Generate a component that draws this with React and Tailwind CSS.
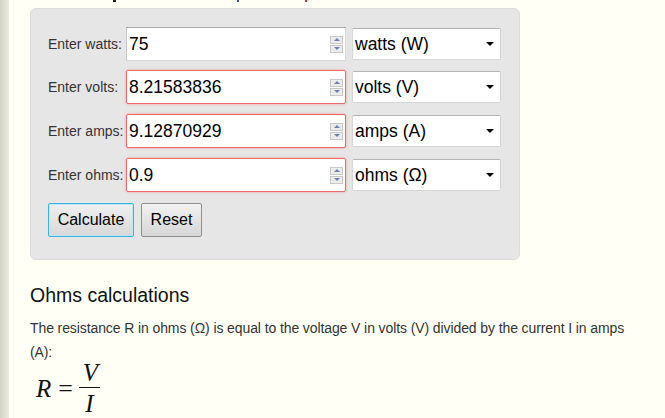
import React from "react";

function Spinner() {
  return (
    <div className="flex flex-col gap-[1px] mr-[2px]">
      <div className="w-[13px] h-[8px] border border-[#c8c8c8] bg-[#ececec] flex items-center justify-center">
        <div className="w-0 h-0 border-l-[3px] border-r-[3px] border-b-[3px] border-l-transparent border-r-transparent border-b-[#6d7fb4]" />
      </div>
      <div className="w-[13px] h-[8px] border border-[#c8c8c8] bg-[#ececec] flex items-center justify-center">
        <div className="w-0 h-0 border-l-[3px] border-r-[3px] border-t-[3px] border-l-transparent border-r-transparent border-t-[#6d7fb4]" />
      </div>
    </div>
  );
}

function Row({ label, value, unit, red, mt }) {
  return (
    <div className={`flex items-center ${mt}`}>
      <div className="w-[78px] text-[14px] text-[#333] whitespace-nowrap" style={{ fontFamily: "'Liberation Sans', Arial, sans-serif" }}>
        {label}
      </div>
      <div
        className={`w-[220px] h-[34px] bg-white flex items-center pl-[2px] ${
          red
            ? "border border-[#e86a6a] shadow-[0_0_3px_#f4a0a0] rounded-[2px]"
            : "border border-[#dadada] border-t-[#a8a8a8] border-l-[#c4c4c4]"
        }`}
      >
        <span className="flex-1 text-[17.5px] text-black" style={{ fontFamily: "'Liberation Sans', Arial, sans-serif" }}>
          {value}
        </span>
        <Spinner />
      </div>
      <div className="ml-[6px] w-[149px] h-[32px] bg-white border border-[#d6d6d6] border-t-[#b4b4b4] rounded-[2px] flex items-center pl-[2px] pr-[6px]">
        <span className="flex-1 text-[17.5px] text-black" style={{ fontFamily: "'Liberation Sans', Arial, sans-serif" }}>
          {unit}
        </span>
        <div className="w-0 h-0 border-l-[4px] border-r-[4px] border-t-[4px] border-l-transparent border-r-transparent border-t-black" />
      </div>
    </div>
  );
}

export default function App() {
  return (
    <div className="w-[665px] h-[418px] overflow-hidden flex bg-[#fffff6]" style={{ fontFamily: "'Liberation Sans', Arial, sans-serif" }}>
      <div className="w-[9px] shrink-0 bg-gradient-to-r from-[#d3d3c2] to-[#ecece0]" />
      <div className="flex-1 pl-[21px] flex flex-col">
        <div className="h-[8px] relative">
          <span className="absolute left-[83px] top-0 w-[3px] h-[2px] bg-[#222]" />
          <span className="absolute left-[207px] top-0 w-[2px] h-[2px] bg-[#35a]" />
          <span className="absolute left-[275px] top-0 w-[2px] h-[2px] bg-[#c33]" />
        </div>
        <div className="w-[490px] h-[252px] bg-[#e6e6e6] border border-[#dcdcdc] rounded-[6px] pt-[18px] pl-[17px] flex flex-col">
          <Row label="Enter watts:" value="75" unit="watts (W)" mt="" />
          <Row label="Enter volts:" value="8.21583836" unit="volts (V)" red mt="mt-[9px]" />
          <Row label="Enter amps:" value="9.12870929" unit="amps (A)" red mt="mt-[10px]" />
          <Row label="Enter ohms:" value="0.9" unit="ohms (Ω)" red mt="mt-[10px]" />
          <div className="flex gap-[7px] mt-[11px]">
            <button className="w-[86px] h-[34px] rounded-[2px] border border-[#3fb3dd] bg-gradient-to-b from-[#f0f0f0] to-[#d8d8d8] text-[16px] text-black shadow-[inset_0_0_0_1px_#bde6f5]" style={{ fontFamily: "'Liberation Sans', Arial, sans-serif" }}>
              Calculate
            </button>
            <button className="w-[61px] h-[34px] rounded-[2px] border border-[#8f8f8f] bg-gradient-to-b from-[#f2f2f2] to-[#d6d6d6] text-[16px] text-black" style={{ fontFamily: "'Liberation Sans', Arial, sans-serif" }}>
              Reset
            </button>
          </div>
        </div>
        <h2 className="mt-[23px] text-[19.5px] leading-[24px] text-[#111]">Ohms calculations</h2>
        <p className="mt-[9px] text-[14px] leading-[24px] text-[#333] w-[615px] tracking-[-0.1px]">
          The resistance R in ohms (Ω) is equal to the voltage V in volts (V) divided by the current I in amps (A):
        </p>
        <div className="flex items-center ml-[6px] mt-[-2px] text-[25px] text-[#111]" style={{ fontFamily: "'Liberation Serif', 'Times New Roman', serif" }}>
          <span className="italic leading-[25px] pr-[1px]">R</span>
          <span className="mx-[6px] leading-[25px] text-[26px] font-light">=</span>
          <div className="flex flex-col items-center">
            <span className="italic leading-[21px] pl-[2px]">V</span>
            <div className="h-[1px] w-[21px] bg-[#111] mt-[4px] mb-[5px]" />
            <span className="italic leading-[21px]">I</span>
          </div>
        </div>
      </div>
    </div>
  );
}
